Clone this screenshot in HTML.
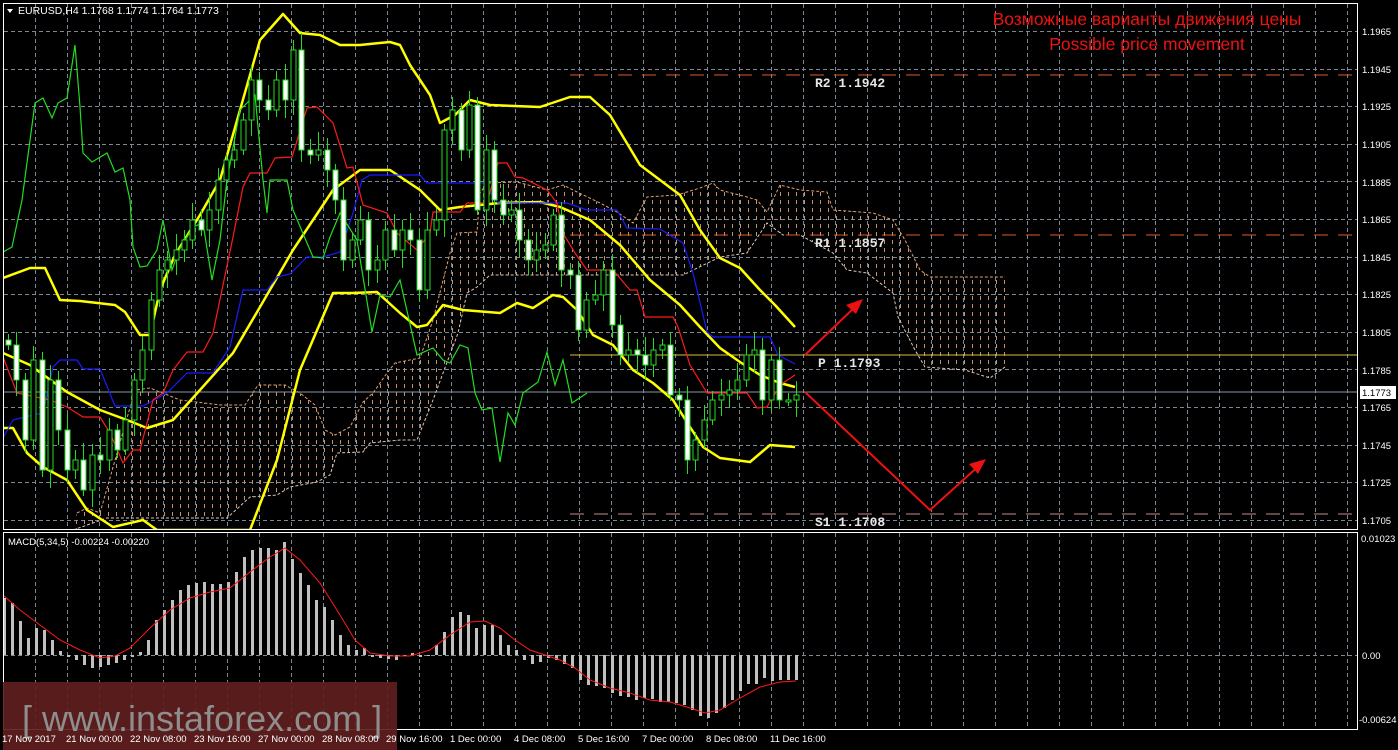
<!DOCTYPE html>
<html><head><meta charset="utf-8"><style>
html,body{margin:0;padding:0;background:#000;width:1398px;height:750px;overflow:hidden}
svg{display:block}
text{font-family:"Liberation Sans","DejaVu Sans",sans-serif}
text.mono{font-family:"Liberation Mono","DejaVu Sans Mono",monospace}
</style></head><body>
<svg id="s" width="1398" height="750" viewBox="0 0 1398 750" xmlns="http://www.w3.org/2000/svg">
<defs>
<pattern id="hatch" width="8" height="8" patternUnits="userSpaceOnUse"><rect x="4" y="0" width="1" height="4" fill="#c8906c"/></pattern>
<clipPath id="mainclip"><rect x="4" y="4" width="1353" height="525"/></clipPath>
</defs>
<rect width="1398" height="750" fill="#000"/>
<g id="grid" stroke="#7c8894" stroke-width="1" stroke-dasharray="4,3"></g>
<g clip-path="url(#mainclip)">
<g fill="url(#hatch)" stroke="none">
<polygon points="77,513 87,508 100,513 125,425 135,390 150,388 180,400 220,405 245,405 258,385 285,385 300,393 315,405 325,430 335,435 350,427 363,402 373,393 387,373 395,363 420,358 433,320 450,253 457,233 477,232 480,193 487,183 517,182 547,190 563,185 573,190 600,203 617,212 633,223 647,197 677,195 700,188 713,183 720,190 747,197 757,200 767,212 780,185 800,190 827,192 833,210 873,213 893,220 905,240 920,270 930,277 1005,277 1005,367 990,378 965,370 925,367 915,350 898,317 893,293 867,273 847,270 833,253 800,235 783,235 767,223 747,253 720,257 683,275 490,275 477,287 467,293 458,333 433,400 417,440 400,440 370,443 363,452 337,453 330,475 317,482 290,487 277,495 250,497 227,518 107,518 73,530"/>
</g>
<polyline fill="none" stroke="#e0a070" stroke-width="1" stroke-dasharray="3,2" points="77,513 87,508 100,513 125,425 135,390 150,388 180,400 220,405 245,405 258,385 285,385 300,393 315,405 325,430 335,435 350,427 363,402 373,393 387,373 395,363 420,358 433,320 450,253 457,233 477,232 480,193 487,183 517,182 547,190 563,185 573,190 600,203 617,212 633,223 647,197 677,195 700,188 713,183 720,190 747,197 757,200 767,212 780,185 800,190 827,192 833,210 873,213 893,220 905,240 920,270 930,277 1005,277"/>
<polyline fill="none" stroke="#d8c8c0" stroke-width="1" stroke-dasharray="3,2" points="73,530 107,518 227,518 250,497 277,495 290,487 317,482 330,475 337,453 363,452 370,443 400,440 417,440 433,400 458,333 467,293 477,287 490,275 683,275 720,257 747,253 767,223 783,235 800,235 833,253 847,270 867,273 893,293 898,317 915,350 925,367 965,370 990,378 1005,367"/>
<line x1="570" y1="75" x2="1358" y2="75" stroke="#e05a28" stroke-dasharray="14,10"/>
<line x1="570" y1="235" x2="1358" y2="235" stroke="#e05a28" stroke-dasharray="14,10"/>
<line x1="570" y1="355" x2="1358" y2="355" stroke="#d8c040"/>
<line x1="570" y1="514" x2="1358" y2="514" stroke="#c88888" stroke-dasharray="14,10"/>
<line x1="4" y1="392" x2="1358" y2="392" stroke="#8a96a4"/>
<g fill="none" stroke="#ffff00" stroke-width="2.5" stroke-linejoin="round">
<polyline points="3,278 30,268 45,268 60,300 80,301 115,305 125,312 140,335 150,335 160,290 175,255 200,215 220,180 240,110 260,40 283,14 300,33 320,35 340,45 360,45 390,42 400,45 410,65 430,95 440,123 455,115 470,100 490,105 540,107 570,97 590,97 610,115 625,140 640,165 660,180 680,195 700,230 720,258 740,268 760,290 775,305 795,327"/>
<polyline points="3,353 30,365 67,392 100,410 127,420 147,428 173,420 200,390 233,353 260,307 293,250 333,190 360,170 390,170 420,190 440,210 460,207 500,203 540,202 560,207 590,220 620,245 650,280 680,305 700,327 720,348 740,362 760,375 780,383 795,387"/>
<polyline points="3,428 13,428 27,453 43,467 67,480 87,510 113,527 143,520 157,530 250,530 277,460 300,370 333,293 353,293 377,292 400,313 417,327 427,325 443,305 463,310 500,313 517,303 533,308 553,295 563,297 577,310 593,335 613,345 633,370 653,383 673,400 690,427 703,447 720,458 750,462 770,445 795,447"/>
</g>
<polyline fill="none" stroke="#1a1aff" stroke-width="1.2" points="3,438 13,420 33,415 43,413 53,367 60,360 77,360 83,369 100,369 115,406 143,406 167,393 187,373 213,373 230,347 243,290 267,290 277,277 290,274 307,257 323,257 340,252 353,213 362,180 370,175 420,175 427,183 483,183 498,203 567,203 587,210 617,210 627,228 660,229 683,243 693,273 707,332 713,337 770,337 778,355 795,364"/>
<polyline fill="none" stroke="#ff1a1a" stroke-width="1.2" points="3,357 17,393 50,400 67,407 83,417 100,417 110,433 123,463 133,450 140,450 153,400 163,393 173,370 187,352 203,352 213,333 233,237 243,187 250,173 267,173 275,158 292,157 307,108 317,107 333,123 347,168 353,167 363,205 387,213 397,233 417,250 430,233 433,212 460,212 467,203 487,203 498,163 507,163 515,177 523,178 547,190 557,203 563,233 575,253 587,270 613,270 630,290 637,290 645,317 673,317 678,327 690,365 707,393 747,393 757,408 767,407 772,398 783,383 795,375"/>
<polyline fill="none" stroke="#22dd22" stroke-width="1.2" points="3,252 12,247 22,200 35,103 43,98 52,118 58,103 67,98 75,45 80,107 83,153 92,162 107,153 115,172 123,168 130,200 133,247 140,267 147,266 157,250 163,220 172,270 180,248 193,227 203,223 212,280 220,240 227,180 240,110 255,95 263,180 267,213 270,180 287,180 293,210 307,243 313,257 323,258 330,237 340,213 357,240 372,332 380,295 390,297 400,280 417,355 433,348 443,360 450,363 460,345 468,348 475,393 482,410 492,408 500,462 508,413 515,425 523,393 538,382 547,352 555,385 563,360 572,403 587,393"/>
<g id="candles"></g>
<g stroke="#ee1111" stroke-width="2" fill="none">
<line x1="805" y1="355" x2="858" y2="304"/>
<polyline points="805,392 930,510 982,463"/>
</g>
<g fill="#ee1111">
<polygon points="863,299 846,305 856,314"/>
<polygon points="986,459 969,464 978,474"/>
</g>
</g>
<g fill="#e6e6e6" font-size="13" font-weight="bold">
<text class="mono" x="815" y="87">R2 1.1942</text>
<text class="mono" x="815" y="247">R1 1.1857</text>
<text class="mono" x="818" y="367">P 1.1793</text>
<text class="mono" x="815" y="526">S1 1.1708</text>
</g>
<text x="1147" y="25" fill="#ee1111" font-size="17.5" text-anchor="middle">Возможные варианты движения цены</text>
<text x="1147" y="50" fill="#ee1111" font-size="17.5" text-anchor="middle">Possible price movement</text>
<polygon points="7,9 13,9 10,13" fill="#fff"/>
<text x="18" y="14" fill="#fff" font-size="10.5">EURUSD,H4  1.1768 1.1774 1.1764 1.1773</text>
<g id="macd"></g>
<polyline fill="none" stroke="#ff1a1a" stroke-width="1" points="3,595 20,610 40,625 60,640 80,650 100,658 115,656 130,648 150,628 170,610 190,598 210,592 230,588 250,572 270,557 285,548 300,560 320,583 340,615 355,640 370,653 390,656 410,656 430,650 450,635 470,622 485,621 500,628 515,640 530,650 545,655 560,660 575,668 590,680 610,688 630,693 650,700 670,702 690,708 705,713 720,710 740,698 760,687 780,682 796,681"/>
<text x="8" y="545" fill="#fff" font-size="9.5">MACD(5,34,5) -0.00224 -0.00220</text>
<rect x="3.5" y="3.5" width="1354" height="526" fill="none" stroke="#fff"/>
<rect x="3.5" y="532.5" width="1354" height="197" fill="none" stroke="#fff"/>
<g fill="#fff" font-size="9.5">
<text x="1362" y="35">1.1965</text><text x="1362" y="73">1.1945</text><text x="1362" y="110">1.1925</text><text x="1362" y="148">1.1905</text><text x="1362" y="186">1.1885</text><text x="1362" y="223">1.1865</text><text x="1362" y="261">1.1845</text><text x="1362" y="298">1.1825</text><text x="1362" y="336">1.1805</text><text x="1362" y="374">1.1785</text><text x="1362" y="411">1.1765</text><text x="1362" y="449">1.1745</text><text x="1362" y="486">1.1725</text><text x="1362" y="524">1.1705</text>
<text x="1361" y="542">0.01023</text><text x="1362" y="659">0.00</text><text x="1359" y="723">-0.00624</text>
</g>
<rect x="1360" y="386" width="36" height="13" fill="#fff"/>
<text x="1362" y="396" fill="#000" font-size="9.5">1.1773</text>
<rect x="3" y="682" width="394" height="68" fill="#5f1e1e" opacity="0.92"/>
<text x="22" y="731" fill="#8e8e8e" font-size="36">[ www.instaforex.com ]</text>
<g fill="#fff" font-size="9.5">
<text x="2" y="742">17 Nov 2017</text><text x="66" y="742">21 Nov 00:00</text><text x="130" y="742">22 Nov 08:00</text><text x="194" y="742">23 Nov 16:00</text><text x="258" y="742">27 Nov 00:00</text><text x="322" y="742">28 Nov 08:00</text><text x="386" y="742">29 Nov 16:00</text><text x="450" y="742">1 Dec 00:00</text><text x="514" y="742">4 Dec 08:00</text><text x="578" y="742">5 Dec 16:00</text><text x="642" y="742">7 Dec 00:00</text><text x="706" y="742">8 Dec 08:00</text><text x="770" y="742">11 Dec 16:00</text>
</g>
</svg>
<script>
(function(){
var NS="http://www.w3.org/2000/svg";
function el(t,a,p){var e=document.createElementNS(NS,t);for(var k in a)e.setAttribute(k,a[k]);p.appendChild(e);return e;}
var g=document.getElementById('grid');
for(var x=35;x<1358;x+=32){el('line',{x1:x+.5,y1:4,x2:x+.5,y2:529},g);el('line',{x1:x+.5,y1:533,x2:x+.5,y2:729},g);}
for(var i=0;i<14;i++){var y=Math.round(31+i*37.6)+.5;el('line',{x1:4,y1:y,x2:1357,y2:y},g);}
el('line',{x1:4,y1:655.5,x2:1357,y2:655.5},g);
var c=[345,380,440,360,470,380,430,470,460,490,455,460,430,450,420,380,350,300,270,260,250,240,220,230,210,180,160,150,120,80,100,110,80,100,50,150,155,150,170,200,260,240,220,270,260,230,250,230,240,290,230,220,130,110,150,105,210,150,200,215,210,240,260,250,245,215,270,275,330,300,295,270,325,355,350,355,365,350,345,395,400,460,440,420,400,395,390,380,355,350,400,360,400,400,395];
var cg=document.getElementById('candles');var prev=340;var sp=788/(c.length-1);
for(var i=0;i<c.length;i++){var o=prev,cl=c[i];var x=Math.round(8+i*sp);
var hi=Math.min(o,cl)-(6+(i*7)%13),lo=Math.max(o,cl)+(5+(i*11)%14);
el('line',{x1:x+.5,y1:hi,x2:x+.5,y2:lo,stroke:'#22dd22','stroke-width':1},cg);
var top=Math.min(o,cl),h=Math.max(2,Math.abs(o-cl));
el('rect',{x:x-2,y:top,width:5,height:h,fill:(cl>o?'#fff':'#000'),stroke:'#22dd22','stroke-width':1},cg);
prev=cl;}
var m=[598,603,621,638,628,630,640,651,657,660,665,668,667,665,663,660,657,652,640,620,610,600,590,585,583,582,584,584,582,572,557,550,548,548,550,542,559,573,585,600,607,620,635,645,650,648,657,658,659,660,656,653,657,656,645,632,617,612,615,628,625,625,635,645,650,660,664,662,658,660,664,668,680,685,686,688,693,696,697,700,698,699,702,702,703,705,710,716,718,713,708,700,691,684,684,678,681,680,680,680];
var mg=document.getElementById('macd');
for(var i=0;i<m.length;i++){var x=3+i*8;var t=Math.min(m[i],655),h=Math.abs(m[i]-655);el('rect',{x:x,y:t,width:3,height:Math.max(h,1),fill:'#c0c0c0'},mg);}
})();
</script>
</body></html>
